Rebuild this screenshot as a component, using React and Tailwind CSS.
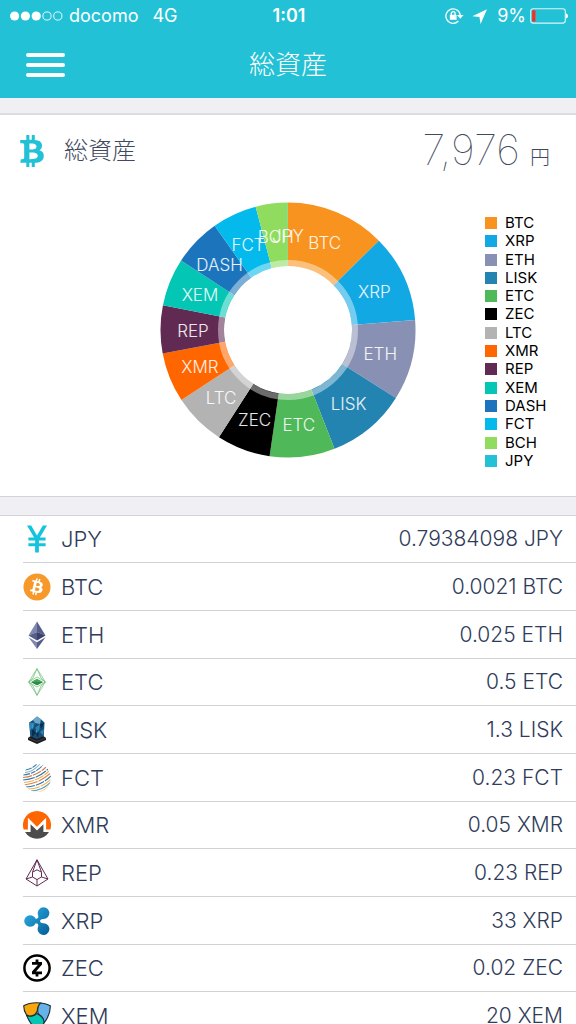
import { FaBitcoin, FaBtc } from 'react-icons/fa';

const slices = [
    { name: 'BTC', color: '#f7931e', end: 45.5 },
    { name: 'XRP', color: '#12a8e3', end: 85.5 },
    { name: 'ETH', color: '#8891b3', end: 122.2 },
    { name: 'LISK', color: '#2384b1', end: 158.6 },
    { name: 'ETC', color: '#4fb859', end: 188.3 },
    { name: 'ZEC', color: '#000000', end: 212.8 },
    { name: 'LTC', color: '#b3b3b3', end: 236.7 },
    { name: 'XMR', color: '#ff6600', end: 259.4 },
    { name: 'REP', color: '#602a52', end: 281.2 },
    { name: 'XEM', color: '#04c6b4', end: 303 },
    { name: 'DASH', color: '#1c75bc', end: 324.9 },
    { name: 'FCT', color: '#04b9eb', end: 345.3 },
    { name: 'BCH', color: '#8fdc5f', end: 359.9 },
    { name: 'JPY', color: '#22c1d6', end: 360 },
];

function point(angle, r) {
    const rad = ((angle - 90) * Math.PI) / 180;
    return [128 + r * Math.cos(rad), 128 + r * Math.sin(rad)];
}

function arcPath(start, end) {
    const [ax, ay] = point(start, 127.5);
    const [bx, by] = point(end, 127.5);
    const [cx, cy] = point(end, 64);
    const [dx, dy] = point(start, 64);
    return `M${ax} ${ay}A127.5 127.5 0 0 1 ${bx} ${by}L${cx} ${cy}A64 64 0 0 0 ${dx} ${dy}Z`;
}

function DonutChart() {
    const arcs = slices.map((s, i) => ({ ...s, start: i === 0 ? 0 : slices[i - 1].end }));

    return (
        <svg viewBox="0 0 256 256" className="size-64" role="img" aria-label="総資産">
            {arcs.map((a) => (
                <path key={a.name} d={arcPath(a.start, a.end)} fill={a.color} />
            ))}
            <circle cx="128" cy="128" r="67" fill="none" stroke="#fff" strokeOpacity="0.42" strokeWidth="6" />
            {arcs.map((a) => {
                const [x, y] = point((a.start + a.end) / 2, 95);
                return (
                    <text key={a.name} x={x} y={y + 7} textAnchor="middle" className="fill-white/90 text-[17px] font-light">
                        {a.name}
                    </text>
                );
            })}
        </svg>
    );
}

function Icon({ children }) {
    return (
        <svg viewBox="0 0 28 28" className="size-7 shrink-0" aria-hidden="true">
            {children}
        </svg>
    );
}

const icons = {
    JPY: (
        <Icon>
            <path
                d="M4 .5H8.2L14 10.6L19.8 .5H24L16.9 12.4H22.6V15.4H15.9V18.2H22.6V21.2H15.9V27.5H12.1V21.2H5.4V18.2H12.1V15.4H5.4V12.4H11.1Z"
                fill="#14c3dc"
            />
        </Icon>
    ),
    BTC: <FaBitcoin className="size-7 shrink-0 text-[#f7982a]" aria-hidden="true" />,
    ETH: (
        <Icon>
            <path d="M14 .5L5.5 14.5L14 11Z" fill="#8087ad" />
            <path d="M14 .5L22.5 14.5L14 11Z" fill="#555d8b" />
            <path d="M5.5 14.5L14 11V19.5Z" fill="#565d8c" />
            <path d="M22.5 14.5L14 11V19.5Z" fill="#3a4068" />
            <path d="M5.5 16.2L14 21.2V28Z" fill="#8087ad" />
            <path d="M22.5 16.2L14 21.2V28Z" fill="#555d8b" />
        </Icon>
    ),
    ETC: (
        <Icon>
            <g fill="none" stroke="#69bd76" strokeWidth=".7" strokeLinejoin="round">
                <path d="M14 .7L22.3 14L14 27.3L5.7 14Z" />
                <path d="M14 .7L10 10L5.7 14L10 18L14 27.3L18 18L22.3 14L18 10Z" />
                <path d="M5.7 14L14 9L22.3 14L14 19Z" />
            </g>
            <path d="M14 10.8L20 14L14 17.2L8 14Z" fill="#3fa957" />
            <path d="M8 14H20L14 17.2Z" fill="#2f8a46" />
        </Icon>
    ),
    LISK: (
        <Icon>
            <path d="M5 22L9 19H19L23 22V24L14 28L5 24Z" fill="#1c1c20" />
            <path d="M5.5 22L14 25.5L22.5 22" fill="none" stroke="#4c4c50" strokeWidth=".7" />
            <path d="M14 .5L18 3.2L21.5 6.5L20.8 20L14 23L7.2 20L6.2 6.5L10 4Z" fill="#164f79" />
            <path d="M14 .5L18 3.2L17 8L12 7L10 4Z" fill="#6ba7c8" />
            <path d="M6.2 6.5L12 7L9 12L7 15ZM12 12L17 8L16 15ZM17 16L21 13L20 19Z" fill="#2d86b6" />
            <path d="M9 12L13 17L9 21ZM17 8L21 7L18 13ZM13 18L16 16L15 22Z" fill="#0b2d4b" />
            <path d="M9 8L11 10L9 14ZM13 13L15 15L13 17Z" fill="#3d98c8" />
        </Icon>
    ),
    FCT: (
        <Icon>
            <defs>
                <clipPath id="fct-globe">
                    <circle cx="14" cy="14" r="14" />
                </clipPath>
            </defs>
            <g clipPath="url(#fct-globe)" fill="none" strokeWidth="1.1">
                <path d="M2 6Q9 5 14 0M0 11Q12 10 20 1" stroke="#3d86b4" strokeDasharray="7 1 5 1" />
                <path d="M2 8.5Q10 8 17 0" stroke="#9ab3c3" />
                <path d="M0 13.5Q14 12 23 3" stroke="#df774c" strokeDasharray="9 1" />
                <path d="M0 16Q15 15 25 5" stroke="#2f78a8" strokeDasharray="12 1" />
                <path d="M1 18.5Q16 17 26 7" stroke="#edb54e" strokeDasharray="10 1" />
                <path d="M1 21Q17 19 27 9.5" stroke="#df8055" strokeDasharray="14 1" />
                <path d="M3 23Q18 22 28 12" stroke="#2f78a8" strokeDasharray="9 1" />
                <path d="M5 25Q18 25 28 15" stroke="#edb54e" strokeDasharray="12 1" />
                <path d="M8 27Q19 27 28 18" stroke="#6c9cba" />
                <path d="M11 28.5Q20 29 27 21" stroke="#edb54e" />
            </g>
        </Icon>
    ),
    XMR: (
        <Icon>
            <path d="M14 0A14 14 0 0 0 .7 18.4H4.9V6.7L14 15.8L23.1 6.7V18.4H27.3A14 14 0 0 0 14 0Z" fill="#ff6600" />
            <path d="M7.6 13.2V21H2A14 14 0 0 0 26 21H20.4V13.2L14 19.6Z" fill="#4c4c4c" />
        </Icon>
    ),
    REP: (
        <Icon>
            <g fill="none" stroke="#602a52" strokeWidth="1" strokeLinejoin="round">
                <path d="M14 .8L25 20L14 27L3 20Z" />
                <path d="M14 10.8L18.5 13.2V18L14 20.6L9.5 18V13.2Z" />
                <path d="M14 .8L9.5 13.2M14 .8L18.5 13.2M3 20L9.5 18M25 20L18.5 18M14 20.6V27" />
            </g>
        </Icon>
    ),
    XRP: (
        <Icon>
            <defs>
                <linearGradient id="xrp-blue" x1="0" y1="0" x2="1" y2="1">
                    <stop offset="0" stopColor="#2ab4e8" />
                    <stop offset="1" stopColor="#075c96" />
                </linearGradient>
            </defs>
            <path
                d="M20.6 .3A5.9 5.9 0 0 0 15 8C15.8 10.6 15 11.7 12.7 11.8C11.5 9.5 9.6 8.2 7 8.2A5.8 5.8 0 0 0 7 19.8C9.6 19.8 11.5 18.5 12.7 16.2C15 16.3 15.8 17.4 15 20A5.9 5.9 0 1 0 20.6 16.2C17.9 16.3 17.1 15.2 17.1 14S17.9 11.8 20.6 11.9A5.8 5.8 0 0 0 20.6 .3Z"
                fill="url(#xrp-blue)"
            />
        </Icon>
    ),
    ZEC: (
        <Icon>
            <circle cx="14" cy="14" r="12.6" fill="none" stroke="#000" strokeWidth="2.5" />
            <path d="M9 8H19V10.6L13 17.5H19V20.2H9V17.6L15 10.7H9ZM12.6 5.5H15.4V8.5H12.6ZM12.6 19.8H15.4V22.6H12.6Z" fill="#000" />
        </Icon>
    ),
    XEM: (
        <Icon>
            <g stroke="#1c2a33" strokeWidth="1.1" strokeLinejoin="round">
                <path d="M.7 3.8C5 1.2 11 .3 18 1C14.5 3 15 6.5 14 9.5C12.5 14 6 15.5 3.5 13C1.5 10 .7 7 .7 3.8Z" fill="#f7a60b" />
                <path d="M18 1C21.5 1.3 25 2.4 27.3 3.8C27.5 9.5 25 16 21 21C21 17 19.5 14.5 16.5 13C13.5 11.5 14.5 3 18 1Z" fill="#67b2e8" />
                <path d="M3.5 13C6 15.5 12 14 14 11.5C17 13 21.5 15.5 21 21C19 24 16.5 26 14 27.3C9 24 5.5 18.5 3.5 13Z" fill="#04c6b4" />
            </g>
        </Icon>
    ),
};

const holdings = [
    { code: 'JPY', amount: '0.79384098' },
    { code: 'BTC', amount: '0.0021' },
    { code: 'ETH', amount: '0.025' },
    { code: 'ETC', amount: '0.5' },
    { code: 'LISK', amount: '1.3' },
    { code: 'FCT', amount: '0.23' },
    { code: 'XMR', amount: '0.05' },
    { code: 'REP', amount: '0.23' },
    { code: 'XRP', amount: '33' },
    { code: 'ZEC', amount: '0.02' },
    { code: 'XEM', amount: '20' },
];

function StatusBar() {
    return (
        <div className="grid h-8 grid-cols-[1fr_auto_1fr] items-center pl-2.5 pr-2 text-lg leading-8">
            <div className="flex items-center">
                <svg viewBox="0 0 53 10" className="mr-1.5 h-2.5 w-[53px]" aria-hidden="true">
                    <g fill="#fff">
                        <circle cx="4.6" cy="5" r="4.6" />
                        <circle cx="15.4" cy="5" r="4.6" />
                        <circle cx="26.2" cy="5" r="4.6" />
                    </g>
                    <g fill="none" stroke="#fff" strokeWidth=".9">
                        <circle cx="37" cy="5" r="4.1" />
                        <circle cx="47.8" cy="5" r="4.1" />
                    </g>
                </svg>
                <span>docomo</span>
                <span className="ml-3.5">4G</span>
            </div>
            <time className="font-semibold">1:01</time>
            <div className="flex items-center justify-end">
                {/* rotation lock */}
                <svg viewBox="0 0 19 16" className="mr-2 h-4 w-[19px]" fill="none" stroke="#fff" aria-hidden="true">
                    <path d="M13.4 13A7.2 7.2 0 1 1 15.3 8" strokeWidth="1.3" />
                    <path d="M12 7H18.6L15.3 10.8Z" fill="#fff" stroke="none" />
                    <rect x="4.8" y="6.8" width="6.8" height="5" rx=".6" fill="#fff" stroke="none" />
                    <path d="M6.3 7V5.6A1.9 1.9 0 0 1 10.1 5.6V7" strokeWidth="1.3" />
                </svg>
                {/* location */}
                <svg viewBox="0 0 15 15" className="mr-2.5 size-[15px]" aria-hidden="true">
                    <path d="M15 .3L8.6 15L7.4 8L.3 7.2Z" fill="#fff" />
                </svg>
                <span>9%</span>
                <svg viewBox="0 0 38 16" className="ml-1 h-4 w-[38px]" aria-hidden="true">
                    <rect x=".7" y=".7" width="34.6" height="14.4" rx="2.6" fill="none" stroke="#fff" strokeOpacity=".85" strokeWidth="1.1" />
                    <rect x="2.2" y="2.2" width="3.2" height="11.4" rx=".6" fill="#ff2a1c" />
                    <path d="M36 5.2Q38 6 38 8T36 10.6Z" fill="#fff" />
                </svg>
            </div>
        </div>
    );
}

function Legend() {
    return (
        <ul className="mt-[15px] flex h-[250px] w-[91px] flex-col justify-between justify-self-end text-[15px] leading-3 text-black">
            {slices.map((s) => (
                <li key={s.name} className="flex items-center gap-2">
                    <span className="size-3" style={{ background: s.color }} />
                    {s.name}
                </li>
            ))}
        </ul>
    );
}

export default function App() {
    return (
        <div className="flex h-screen flex-col overflow-hidden bg-white font-['Inter','Noto_Sans_CJK_JP',sans-serif] text-[#2f3b59]">
            <header className="shrink-0 bg-[#22c1d6] text-white">
                <StatusBar />
                <div className="grid h-[66px] grid-cols-[1fr_auto_1fr] items-center px-[26px]">
                    <button type="button" aria-label="メニュー" className="flex w-[39px] flex-col gap-1.5">
                        <span className="h-1 w-full rounded-full bg-white" />
                        <span className="h-1 w-full rounded-full bg-white" />
                        <span className="h-1 w-full rounded-full bg-white" />
                    </button>
                    <h1 className="text-[26px] font-light leading-8">総資産</h1>
                </div>
            </header>

            <div className="h-[17px] shrink-0 border-b-2 border-[#dcdce1] bg-[#efeff4]" />

            {/* Total assets */}
            <section className="shrink-0 pb-[29px]">
                <div className="flex h-[87px] items-center pb-4 pl-5 pr-[26px]">
                    <FaBtc className="h-8 w-6 text-[#22c1d6]" aria-hidden="true" />
                    <h2 className="ml-5 text-2xl font-light leading-8 text-[#3f4a5e]">総資産</h2>
                    <p className="ml-auto flex items-baseline gap-2.5 text-[#3f4a5e]">
                        <span className="text-[42px] font-thin leading-10">7,976</span>
                        <span className="text-xl font-light">円</span>
                    </p>
                </div>
                <div className="grid grid-cols-[1fr_auto_1fr] items-start">
                    <div />
                    <DonutChart />
                    <Legend />
                </div>
            </section>

            <div className="h-5 shrink-0 border-y border-[#d2d2d7] bg-[#efeff4]" />

            {/* Holdings */}
            <ul className="pl-[23px]">
                {holdings.map((h) => (
                    <li
                        key={h.code}
                        className="flex h-12 items-center border-b border-[#d2d2d6] pr-[13px] font-light nth-[3n+1]:h-[47px]"
                    >
                        {icons[h.code]}
                        <span className="ml-2.5 text-[22px] leading-8">{h.code}</span>
                        <span className="ml-auto text-[21px] leading-8">
                            {h.amount} {h.code}
                        </span>
                    </li>
                ))}
            </ul>
        </div>
    );
}
